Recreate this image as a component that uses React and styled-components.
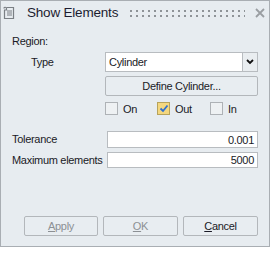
import React from "react";
import styled, { createGlobalStyle } from "styled-components";

const Global = createGlobalStyle`
  html, body { margin: 0; padding: 0; background: #ffffff; }
  body { font-family: "Liberation Sans", Arial, sans-serif; }
  * { box-sizing: border-box; }
`;

const Window = styled.div`
  width: 270px;
  height: 247px;
  border: 1px solid #a9aeb3;
  background: #e7ecf0;
  display: flex;
  flex-direction: column;
  color: #1a1a26;
  font-size: 11px;
  letter-spacing: -0.3px;
`;

const TitleBar = styled.div`
  height: 23px;
  display: flex;
  align-items: center;
  padding-left: 2px;
  padding-right: 4px;
`;

const TitleText = styled.span`
  font-size: 13.5px;
  color: #1c1c30;
  margin-left: 12px;
  letter-spacing: -0.2px;
`;

const Grip = styled.div`
  flex: 1;
  height: 7px;
  margin: 1px 10px 0 12px;
  background-image: linear-gradient(#8e9397, #8e9397);
  -webkit-mask: repeating-linear-gradient(90deg, #000 0 2px, transparent 2px 6px),
    linear-gradient(#000 0 2px, transparent 2px 5px, #000 5px 7px);
  -webkit-mask-composite: source-in;
  mask-composite: intersect;
`;

const Body = styled.div`
  flex: 1;
  display: flex;
  flex-direction: column;
  padding: 11px 11px 10px 11px;
`;

const Label = styled.div`
  line-height: 13px;
  white-space: nowrap;
  padding-left: ${(p) => p.$indent || 0}px;
`;

const FieldGrid = styled.div`
  display: grid;
  grid-template-columns: ${(p) => p.$label}px 1fr;
  align-items: center;
  row-gap: ${(p) => p.$gap || 4}px;
  margin-top: ${(p) => p.$top || 0}px;
`;

const SelectWrap = styled.div`
  display: flex;
  height: 20px;
`;

const SelectBox = styled.div`
  flex: 1;
  background: #fff;
  border: 1px solid #b8bcc0;
  padding-left: 3px;
  display: flex;
  align-items: center;
`;

const DropBtn = styled.div`
  width: 15px;
  border: 1px solid #b8bcc0;
  border-left: none;
  display: flex;
  align-items: center;
  justify-content: center;
  background: #e9edf0;
`;

const PushButton = styled.div`
  height: 20px;
  border: 1px solid #b3b7bb;
  border-radius: 2px;
  display: flex;
  align-items: center;
  justify-content: center;
  color: ${(p) => (p.$disabled ? "#8c9094" : "#1a1a26")};
  background: #e8edf1;
  u { text-decoration: underline; }
`;

const CheckRow = styled.div`
  display: grid;
  grid-template-columns: 52px 53px auto;
  height: 13px;
  align-items: center;
  margin-top: 2px;
`;

const CheckItem = styled.div`
  display: flex;
  align-items: center;
  gap: 5px;
`;

const Box = styled.div`
  width: 13px;
  height: 13px;
  border: 1px solid ${(p) => (p.$checked ? "#b7a35c" : "#aeb2b6")};
  background: ${(p) => (p.$checked ? "#f4d77f" : "#eef1f3")};
  display: flex;
  align-items: center;
  justify-content: center;
`;

const Input = styled.div`
  height: ${(p) => p.$h || 17}px;
  background: #fff;
  border: 1px solid #b8bcc0;
  display: flex;
  align-items: center;
  justify-content: flex-end;
  padding-right: 3px;
`;

const ButtonRow = styled.div`
  margin-top: auto;
  display: grid;
  grid-template-columns: 74px 75px 75px;
  justify-content: end;
  column-gap: 5px;
`;

const DocIcon = () => (
  <svg width="12" height="14" viewBox="0 0 12 14">
    <path d="M3.5 1.5 H10.5 V12.5 H1.5 V4" fill="none" stroke="#7a7f84" strokeWidth="1.2" />
    <path d="M1 2.5 C1 0.8 3.5 0.8 3.5 2.5 V4 H1" fill="none" stroke="#7a7f84" strokeWidth="1.2" />
    <path d="M4 5 H9 M4 7 H9 M4 9 H9" stroke="#7a7f84" strokeWidth="1" />
  </svg>
);

const CloseIcon = () => (
  <svg width="10" height="10" viewBox="0 0 10 10">
    <path d="M1 1 L9 9 M9 1 L1 9" stroke="#9a9ea2" strokeWidth="1.8" />
  </svg>
);

const Chevron = () => (
  <svg width="8" height="6" viewBox="0 0 8 6">
    <path d="M1 1 L4 4 L7 1" fill="none" stroke="#111" strokeWidth="1.8" />
  </svg>
);

const Check = () => (
  <svg width="10" height="9" viewBox="0 0 10 9">
    <path d="M1.5 4.5 L4 7 L8.5 1.5" fill="none" stroke="#2f6fd0" strokeWidth="1.8" />
  </svg>
);

export default function App() {
  return (
    <>
      <Global />
      <Window>
        <TitleBar>
          <DocIcon />
          <TitleText>Show Elements</TitleText>
          <Grip />
          <CloseIcon />
        </TitleBar>
        <Body>
          <Label>Region:</Label>
          <FieldGrid $label={93} $top={4}>
            <Label $indent={19}>Type</Label>
            <SelectWrap>
              <SelectBox>Cylinder</SelectBox>
              <DropBtn>
                <Chevron />
              </DropBtn>
            </SelectWrap>
            <div />
            <PushButton>Define Cylinder...</PushButton>
            <div />
            <CheckRow>
              <CheckItem>
                <Box />
                <span>On</span>
              </CheckItem>
              <CheckItem>
                <Box $checked>
                  <Check />
                </Box>
                <span>Out</span>
              </CheckItem>
              <CheckItem>
                <Box />
                <span>In</span>
              </CheckItem>
            </CheckRow>
          </FieldGrid>
          <FieldGrid $label={95} $top={16}>
            <Label>Tolerance</Label>
            <Input>0.001</Input>
            <Label>Maximum elements</Label>
            <Input $h={16}>5000</Input>
          </FieldGrid>
          <ButtonRow>
            <PushButton $disabled>
              <span><u>A</u>pply</span>
            </PushButton>
            <PushButton $disabled>
              <span><u>O</u>K</span>
            </PushButton>
            <PushButton>
              <span><u>C</u>ancel</span>
            </PushButton>
          </ButtonRow>
        </Body>
      </Window>
    </>
  );
}
